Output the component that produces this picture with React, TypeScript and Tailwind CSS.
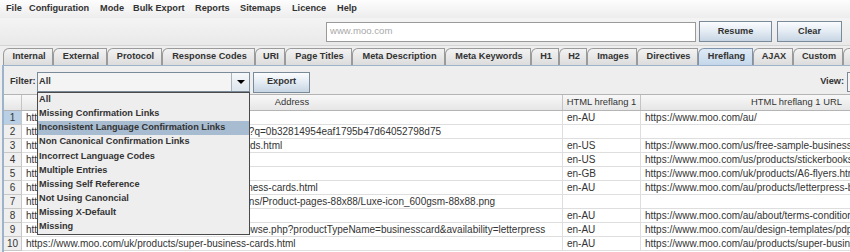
const MENU: [string, string][] = [
  ["File", "w-[23px]"],
  ["Configuration", "w-[71px]"],
  ["Mode", "w-[33px]"],
  ["Bulk Export", "w-[62px]"],
  ["Reports", "w-[45px]"],
  ["Sitemaps", "w-[52px]"],
  ["Licence", "w-[45px]"],
  ["Help", "w-[30px]"],
];

const TABS: [string, string][] = [
  ["Internal", "w-[50px]"],
  ["External", "w-[54px]"],
  ["Protocol", "w-[55px]"],
  ["Response Codes", "w-[93px]"],
  ["URI", "w-[30px]"],
  ["Page Titles", "w-[67px]"],
  ["Meta Description", "w-[93px]"],
  ["Meta Keywords", "w-[86px]"],
  ["H1", "w-[28px]"],
  ["H2", "w-[28px]"],
  ["Images", "w-[50px]"],
  ["Directives", "w-[61px]"],
  ["Hreflang", "w-[55px]"],
  ["AJAX", "w-[40px]"],
  ["Custom", "w-[50px]"],
  ["Structured Data", "w-[100px]"],
];

const FILTERS = [
  "All",
  "Missing Confirmation Links",
  "Inconsistent Language Confirmation Links",
  "Non Canonical Confirmation Links",
  "Incorrect Language Codes",
  "Multiple Entries",
  "Missing Self Reference",
  "Not Using Canoncial",
  "Missing X-Default",
  "Missing",
];

const ROWS: [string, string, string][] = [
  ["https://www.moo.com/au/", "en-AU", "https://www.moo.com/au/"],
  ["https://www.moo.com/uk/search/searchresults.php?q=0b32814954eaf1795b47d64052798d75", "", ""],
  ["https://www.moo.com/us/free-sample-business-cards.html", "en-US", "https://www.moo.com/us/free-sample-business-cards.html"],
  ["https://www.moo.com/us/products/stickerbooks", "en-US", "https://www.moo.com/us/products/stickerbooks.html"],
  ["https://www.moo.com/uk/products/A6-flyers.html", "en-GB", "https://www.moo.com/uk/products/A6-flyers.html"],
  ["https://www.moo.com/au/products/letterpress-business-cards.html", "en-AU", "https://www.moo.com/au/products/letterpress-business-cards.html"],
  ["https://www.moo.com/au/media/wysiwyg/home-icons/Product-pages-88x88/Luxe-icon_600gsm-88x88.png", "", ""],
  ["https://www.moo.com/au/about/terms-conditions", "en-AU", "https://www.moo.com/au/about/terms-conditions.html"],
  ["https://www.moo.com/au/design-templates/pdp/browse.php?productTypeName=businesscard&availability=letterpress", "en-AU", "https://www.moo.com/au/design-templates/pdp/browse.php"],
  ["https://www.moo.com/uk/products/super-business-cards.html", "en-AU", "https://www.moo.com/au/products/super-business-cards.html"],
];

function MetalButton({ label, className }: { label: string; className: string }) {
  return (
    <div
      className={`flex shrink-0 items-center justify-center border border-[#7a8a99] bg-gradient-to-b from-[#fbfcfe] via-[#e3ebf3] to-[#c7d5e3] text-[9.2px] font-bold text-[#333] ${className}`}
    >
      {label}
    </div>
  );
}

export default function App() {
  return (
    <div className="relative flex h-[252px] w-[850px] flex-col overflow-hidden bg-[#eeeeee] font-['Liberation_Sans',Arial,sans-serif] text-[#333333]">
      {/* menu bar */}
      <div className="flex h-[18px] shrink-0 items-center bg-gradient-to-b from-[#fdfdfd] to-[#ededed] pl-[6px] text-[9.2px] font-bold">
        {MENU.map(([m, w]) => (
          <div key={m} className={`${w} shrink-0 whitespace-nowrap`}>
            {m}
          </div>
        ))}
      </div>

      {/* toolbar */}
      <div className="flex h-[28px] shrink-0 items-center justify-end border-b border-[#d4d4d4] bg-gradient-to-b from-[#f4f4f4] to-[#e9e9e9] pr-[8px]">
        <div className="flex h-[20px] w-[370px] items-center border border-[#9a9a9a] bg-white pl-[3px] text-[9.6px] text-[#a9a9a9]">
          www.moo.com
        </div>
        <MetalButton label="Resume" className="ml-[3px] h-[21px] w-[73px]" />
        <MetalButton label="Clear" className="ml-[5px] h-[21px] w-[65px]" />
      </div>

      {/* tabs */}
      <div className="flex h-[19px] shrink-0 items-end pl-[3px]">
        {TABS.map(([t, w]) => {
          const sel = t === "Hreflang";
          return (
            <div
              key={t}
              className={`${w} flex h-[17px] shrink-0 items-center justify-center whitespace-nowrap rounded-tl-[6px] border-t border-r border-l pl-[2px] text-[9.2px] font-bold ${
                sel
                  ? "border-[#7f93a8] bg-gradient-to-b from-[#dfeaf5] to-[#c4d7ea]"
                  : "border-[#9a9a9a] bg-gradient-to-b from-[#f3f3f3] to-[#dcdcdc]"
              }`}
            >
              {t}
            </div>
          );
        })}
      </div>

      {/* tab content */}
      <div className="ml-[2px] flex min-h-0 flex-1 flex-col border-t border-l-2 border-[#9db3cb]">
        {/* filter row */}
        <div className="flex h-[28px] shrink-0 items-center pt-[4px] pl-[6px] text-[9.2px] font-bold">
          <div className="w-[27px] shrink-0">Filter:</div>
          <div className="relative h-[20px] w-[213px] shrink-0">
            <div className="flex h-full w-full border border-[#7a8a99] bg-[#f4f4f4]">
              <div className="flex flex-1 items-center pl-[1px]">All</div>
              <div className="flex w-[18px] items-center justify-center border-l border-[#a8b4c0] bg-gradient-to-b from-[#f6f8fa] to-[#dde5ed]">
                <div className="h-0 w-0 border-x-[4px] border-t-[4px] border-x-transparent border-t-black" />
              </div>
            </div>
            {/* open popup list */}
            <div className="absolute top-[20px] left-0 z-10 w-[213px] border border-[#4a4a4a] bg-[#eeeeee]">
              {FILTERS.map((f, i) => (
                <div
                  key={f}
                  className={`flex h-[14.1px] items-center whitespace-nowrap pl-[1px] ${
                    i === 2 ? "bg-[#a8bcd1]" : ""
                  }`}
                >
                  {f}
                </div>
              ))}
            </div>
          </div>
          <MetalButton label="Export" className="ml-[3px] h-[21px] w-[57px]" />
          <div className="ml-auto">View:</div>
          <div className="ml-[3px] h-[20px] w-[3px] shrink-0 border-t border-b border-l border-[#7a8a99] bg-[#f4f4f4]" />
        </div>

        {/* table */}
        <div className="min-h-0 flex-1 overflow-hidden bg-white">
          <div className="flex h-[17px] w-[949px] border-t border-b border-[#b4b4b4] bg-gradient-to-b from-[#f8f8f8] to-[#e6e6e6] text-[9.4px]">
            <div className="w-[18px] shrink-0 border-r border-[#c4c4c4]" />
            <div className="flex w-[541px] shrink-0 items-center justify-center border-r border-[#c4c4c4]">Address</div>
            <div className="flex w-[78px] shrink-0 items-center justify-center border-r border-[#c4c4c4]">HTML hreflang 1</div>
            <div className="flex w-[312px] shrink-0 items-center justify-center border-r border-[#c4c4c4]">HTML hreflang 1 URL</div>
          </div>
          {ROWS.map(([addr, lang, url], i) => (
            <div key={i} className="flex h-[14px] w-[949px] text-[10px] leading-none">
              <div
                className={`flex w-[18px] shrink-0 items-center justify-center border-r border-b border-[#c8c8c8] ${
                  i === 0 ? "bg-[#b8cfe5]" : "bg-[#efefef]"
                }`}
              >
                {i + 1}
              </div>
              <div className="flex w-[541px] shrink-0 items-center overflow-hidden whitespace-nowrap border-r border-b border-[#dedede] pl-[4px]">
                {addr}
              </div>
              <div className="flex w-[78px] shrink-0 items-center overflow-hidden whitespace-nowrap border-r border-b border-[#dedede] pl-[4px]">
                {lang}
              </div>
              <div className="flex w-[312px] shrink-0 items-center overflow-hidden whitespace-nowrap border-r border-b border-[#dedede] pl-[4px]">
                {url}
              </div>
            </div>
          ))}
        </div>
      </div>
    </div>
  );
}
